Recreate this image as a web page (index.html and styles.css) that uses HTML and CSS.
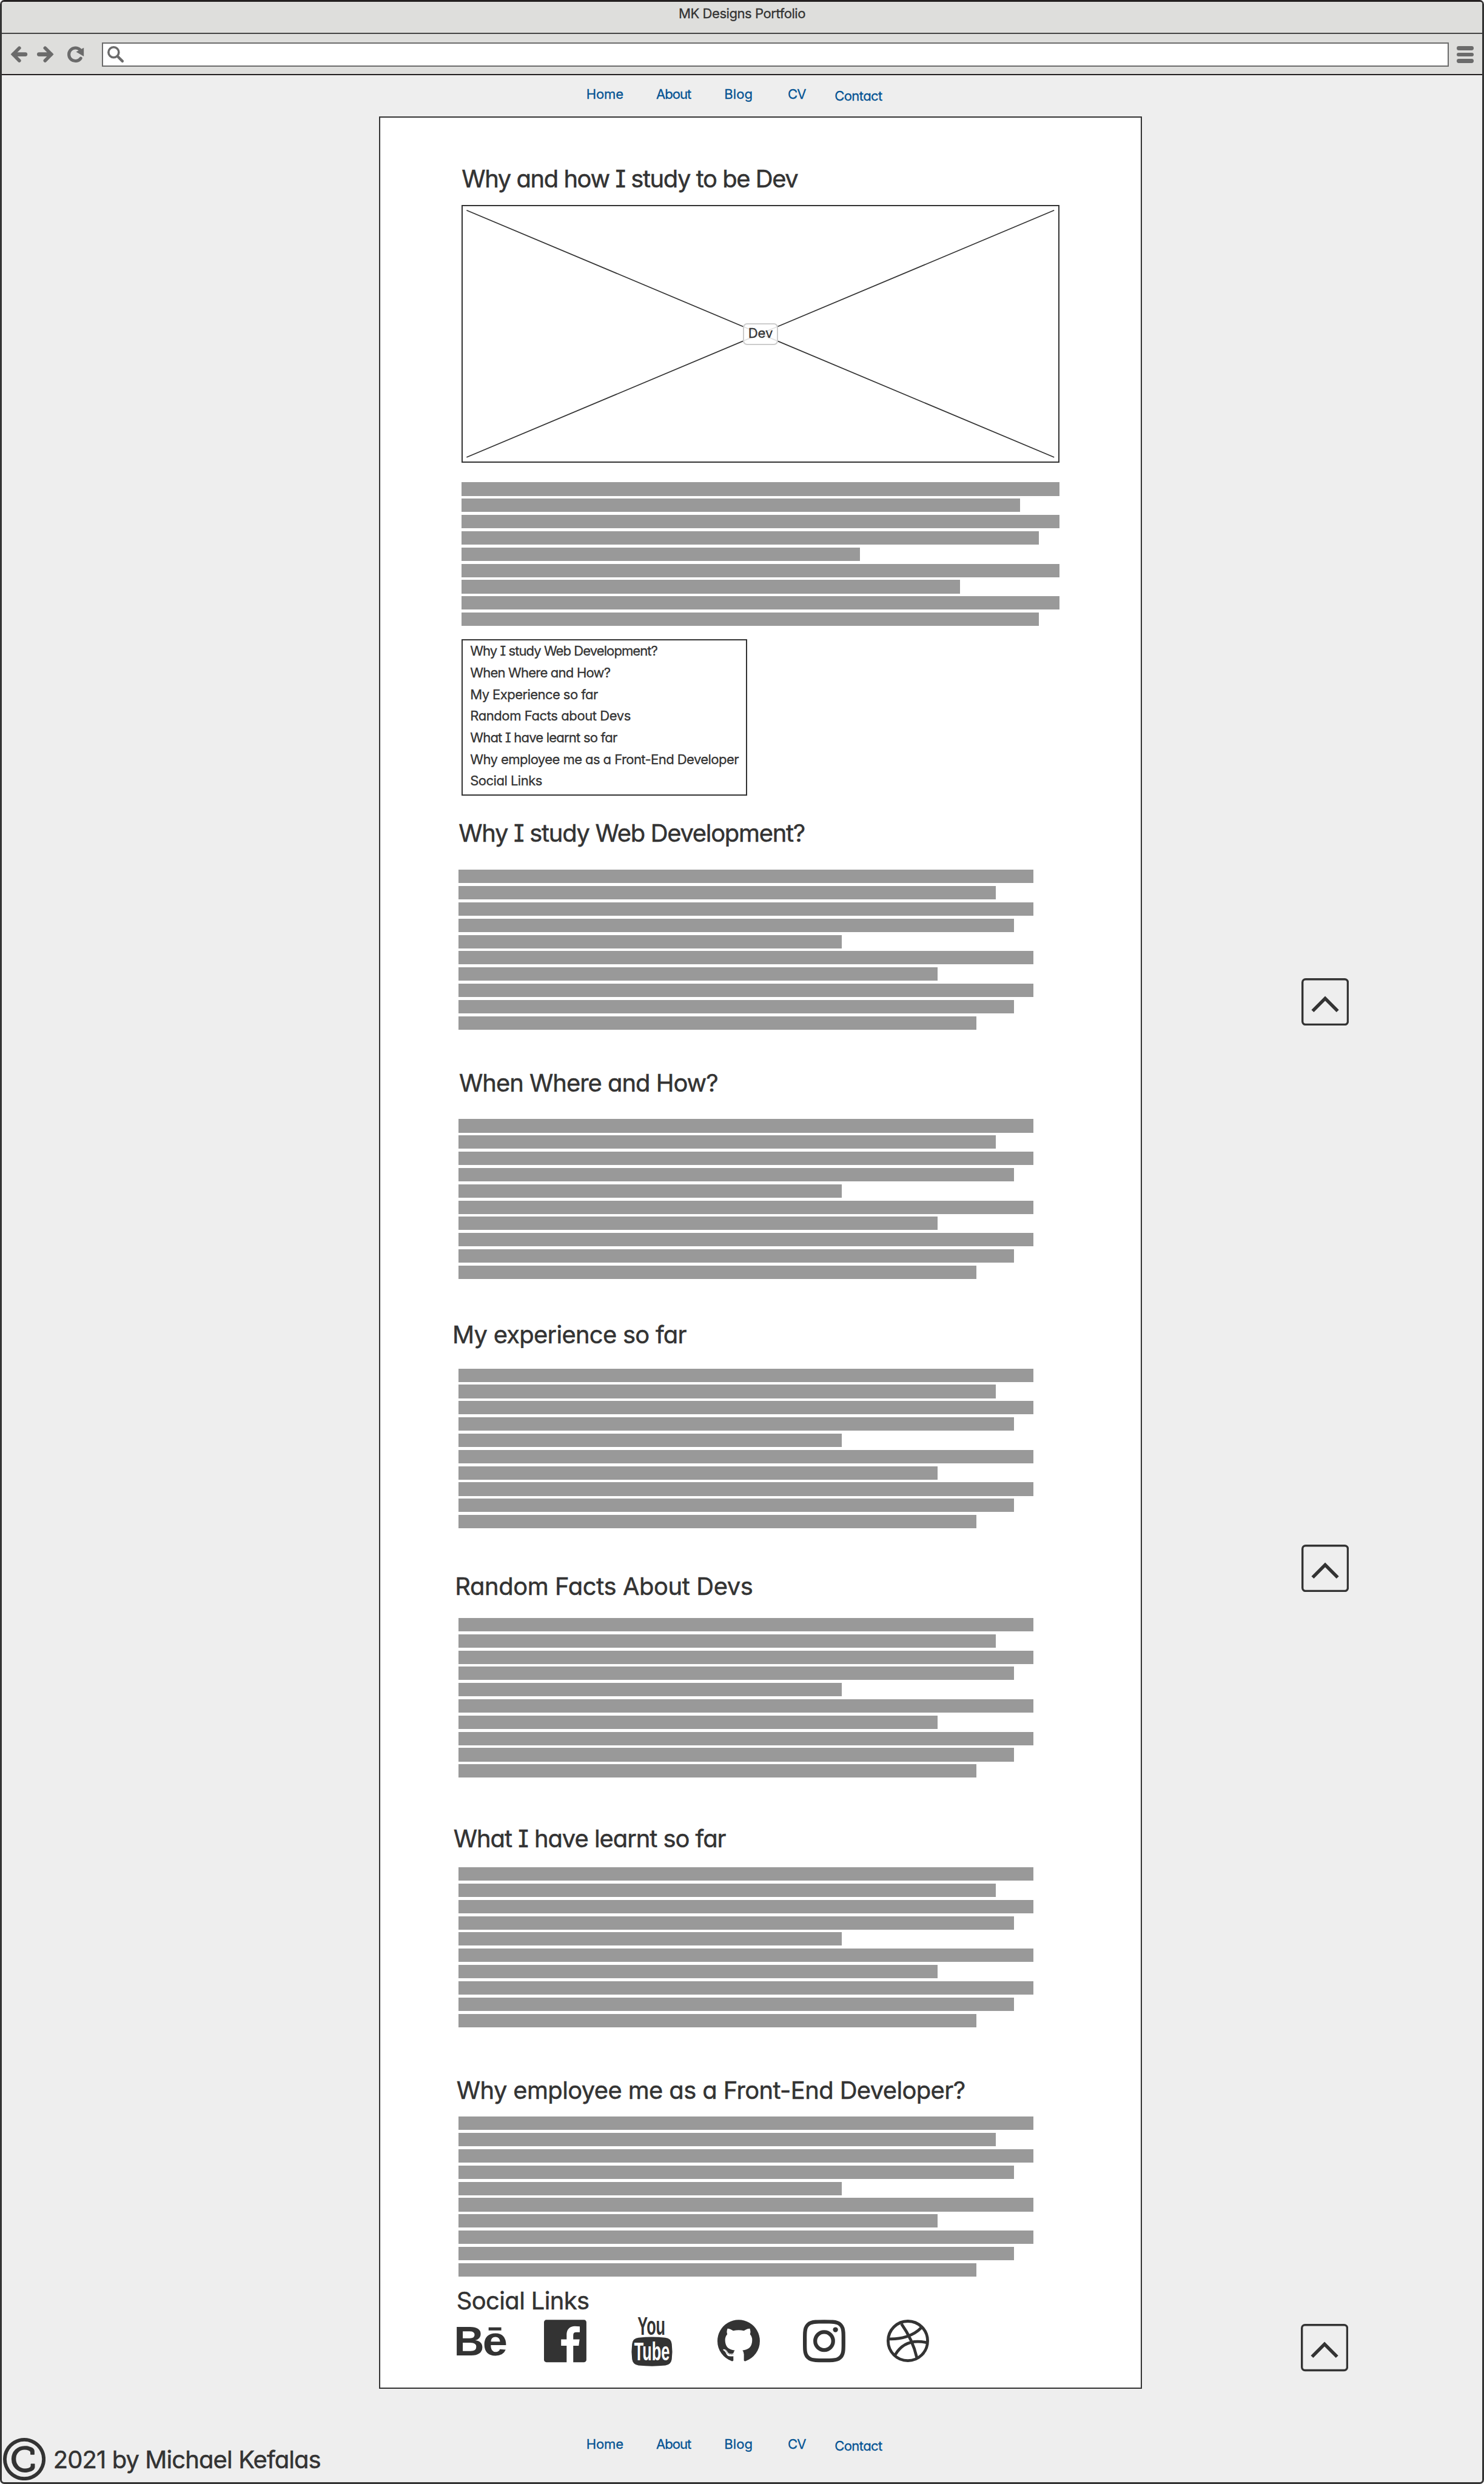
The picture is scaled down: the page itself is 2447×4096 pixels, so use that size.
FILE: index.html
```html
<!DOCTYPE html>
<html lang="en">
<head>
<meta charset="utf-8">
<title>MK Designs Portfolio</title>
<link rel="stylesheet" href="styles.css">
</head>
<body>
<div class="window">
  <header class="titlebar"><span class="t-title">MK Designs Portfolio</span></header>
  <div class="toolbar">
    <svg class="tool back" viewBox="0 0 32 32"><path d="M16.3 3.7 4.2 16l12.1 12.3" stroke-width="6.6"/><path d="M5.5 16H28" stroke-width="8"/></svg>
    <svg class="tool forward" viewBox="0 0 32 32"><path d="M15.7 3.7 27.8 16 15.7 28.3" stroke-width="6.6"/><path d="M26.5 16H4" stroke-width="8"/></svg>
    <svg class="tool reload" viewBox="0 0 32 32"><path d="M24.5 7A12.7 12.7 0 1 0 26 23.7" stroke-width="6"/><path class="solid" d="M32 3.3V20L17 11.3Z"/></svg>
    <div class="address"><svg class="tool search" viewBox="0 0 32 32"><circle cx="12.2" cy="12" r="10" stroke-width="4.2"/><path d="M20 20l9.3 9.3" stroke-width="5.2"/></svg></div>
    <div class="menu"><i></i><i></i><i></i></div>
  </div>
  <nav class="nav">
    <a class="t-home">Home</a><a class="t-about">About</a><a class="t-blog">Blog</a><a class="t-cv">CV</a><a class="t-contact">Contact</a>
  </nav>
  <div class="canvas">
    <main class="page">
      <h1 class="heading t-main">Why and how I study to be Dev</h1>
      <div class="picture">
        <svg viewBox="0 0 1156 496" preserveAspectRatio="none"><path d="M7.500 8 1148.500 488M7.500 488 1148.500 8"/></svg>
        <span class="picture-label">Dev</span>
      </div>
      <div class="lines intro"><i></i><i></i><i></i><i></i><i></i><i></i><i></i><i></i><i></i></div>
      <ul class="contents">
        <li class="c1">Why I study Web Development?</li>
        <li class="c2">When Where and How?</li>
        <li class="c3">My Experience so far</li>
        <li class="c4">Random Facts about Devs</li>
        <li class="c5">What I have learnt so far</li>
        <li class="c6">Why employee me as a Front-End Developer</li>
        <li class="c7">Social Links</li>
      </ul>
      <section class="section s1">
        <h2 class="heading">Why I study Web Development?</h2>
        <div class="lines"><i></i><i></i><i></i><i></i><i></i><i></i><i></i><i></i><i></i><i></i></div>
      </section>
      <section class="section s2">
        <h2 class="heading">When Where and How?</h2>
        <div class="lines"><i></i><i></i><i></i><i></i><i></i><i></i><i></i><i></i><i></i><i></i></div>
      </section>
      <section class="section s3">
        <h2 class="heading">My experience so far</h2>
        <div class="lines"><i></i><i></i><i></i><i></i><i></i><i></i><i></i><i></i><i></i><i></i></div>
      </section>
      <section class="section s4">
        <h2 class="heading">Random Facts About Devs</h2>
        <div class="lines"><i></i><i></i><i></i><i></i><i></i><i></i><i></i><i></i><i></i><i></i></div>
      </section>
      <section class="section s5">
        <h2 class="heading">What I have learnt so far</h2>
        <div class="lines"><i></i><i></i><i></i><i></i><i></i><i></i><i></i><i></i><i></i><i></i></div>
      </section>
      <section class="section s6">
        <h2 class="heading">Why employee me as a Front-End Developer?</h2>
        <div class="lines"><i></i><i></i><i></i><i></i><i></i><i></i><i></i><i></i><i></i><i></i></div>
      </section>
      <section class="social">
        <h2 class="heading">Social Links</h2>
        <div class="icons">
          <svg class="behance" viewBox="0 0 96 98"><text x="-5.4" y="77" font-size="81.5">B</text><text x="50.4" y="77" font-size="81.5" textLength="48.5" lengthAdjust="spacingAndGlyphs">e</text><rect x="62" y="22" width="24.6" height="6"/></svg>
          <svg class="facebook" viewBox="0 -10 1536 1829"><path d="M1451 128q35 0 60 25t25 60v1366q0 35-25 60t-60 25h-391v-595h199l30-232h-229v-148q0-56 23.500-84t91.500-28l122-1v-207q-63-9-178-9-136 0-217.500 80t-81.500 226v171h-200v232h200v595h-735q-35 0-60-25t-25-60v-1366q0-35 25-60t60-25h1366z"/></svg>
          <svg class="youtube" viewBox="0 0 80 98"><text x="12" y="36.5" font-size="50" textLength="54" lengthAdjust="spacingAndGlyphs">You</text><path d="M14 42Q40 39.500 66 42 77 43 78.500 54 80.500 69 78.500 84 77 95 66 96 40 98.500 14 96 3 95 1.500 84-.5 69 1.500 54 3 43 14 42Z"/><text class="inverse" x="5.5" y="86" font-size="49" textLength="69" lengthAdjust="spacingAndGlyphs">Tube</text></svg>
          <svg class="github" viewBox="0 -10 1536 1829"><path d="M768 128q209 0 385.500 103t279.500 279.500 103 385.500q0 251-146.500 451.500t-378.500 277.500q-27 5-40-7t-13-30q0-3 .5-76.500t.5-134.500q0-97-52-142 57-6 102.500-18t94-39 81-66.500 53-105 20.500-150.500q0-119-79-206 37-91-8-204-28-9-81 11t-92 44l-38 24q-93-26-192-26t-192 26q-16-11-42.500-27t-83.500-38.500-85-13.500q-45 113-8 204-79 87-79 206 0 85 20.500 150t52.500 105 80.500 67 94 39 102.500 18q-39 36-49 103-21 10-45 15t-57 5-65.500-21.500-55.500-62.500q-19-32-48.500-52t-49.500-24l-20-3q-21 0-29 4.500t-5 11.500 9 14 13 12l7 5q22 10 43.500 38t31.500 51l10 23q13 38 44 61.500t67 30 69.500 7 55.500-3.500l23-4q0 38 .5 88.500t.5 54.500q0 18-13 30t-40 7q-232-77-378.500-277.500t-146.500-451.500q0-209 103-385.500t279.500-279.500 385.500-103zm-477 1103q3-7-7-12-10-3-13 2-3 7 7 12 9 6 13-2zm31 34q7-5-2-16-10-9-16-3-7 5 2 16 10 10 16 3zm30 45q9-7 0-19-8-13-17-6-9 5 0 18t17 7zm42 42q8-8-4-19-12-12-20-3-9 8 4 19 12 12 20 3zm57 25q3-11-13-16-15-4-19 7t13 15q15 6 19-6zm63 5q0-13-17-11-16 0-16 11 0 13 17 11 16 0 16-11zm58-10q-2-11-18-9-16 3-14 15t18 8 14-14z"/></svg>
          <svg class="instagram" viewBox="0 -10 1536 1829"><path d="M1024 896q0-106-75-181t-181-75-181 75-75 181 75 181 181 75 181-75 75-181zm138 0q0 164-115 279t-279 115-279-115-115-279 115-279 279-115 279 115 115 279zm108-410q0 38-27 65t-65 27-65-27-27-65 27-65 65-27 65 27 27 65zm-502-220q-7 0-76.500-.5t-105.500 0-96.500 3-103 10-71.500 18.500q-50 20-88 58t-58 88q-11 29-18.500 71.500t-10 103-3 96.500 0 105.500.5 76.500-.5 76.500 0 105.500 3 96.500 10 103 18.500 71.500q20 50 58 88t88 58q29 11 71.500 18.500t103 10 96.500 3 105.500 0 76.500-.5 76.500.5 105.500 0 96.500-3 103-10 71.500-18.500q50-20 88-58t58-88q11-29 18.500-71.500t10-103 3-96.500 0-105.500-.5-76.500.5-76.500 0-105.500-3-96.500-10-103-18.500-71.500q-20-50-58-88t-88-58q-29-11-71.500-18.500t-103-10-96.500-3-105.500 0-76.500.5zm768 630q0 229-5 317-10 208-124 322t-322 124q-88 5-317 5t-317-5q-208-10-322-124t-124-322q-5-88-5-317t5-317q10-208 124-322t322-124q88-5 317-5t317 5q208 10 322 124t124 322q5 88 5 317z"/></svg>
          <svg class="dribbble" viewBox="0 -21.5 247 294"><g><circle cx="123.5" cy="123.5" r="115"/><path d="M86 24C130 86 160 151 176 221M15 112C80 114 155 96 202 46M50 204C90 136 155 116 232 133"/></g></svg>
        </div>
      </section>
    </main>
    <aside class="jumps">
      <svg class="jump j1" viewBox="0 0 92 92"><rect x="2" y="2" width="88" height="88" rx="6"/><path d="M21.700 63.700 46 39.300 70.300 63.700"/></svg>
      <svg class="jump j2" viewBox="0 0 92 92"><rect x="2" y="2" width="88" height="88" rx="6"/><path d="M21.700 63.700 46 39.300 70.300 63.700"/></svg>
      <svg class="jump j3" viewBox="0 0 92 92"><rect x="2" y="2" width="88" height="88" rx="6"/><path d="M21.700 63.700 46 39.300 70.300 63.700"/></svg>
    </aside>
  </div>
  <footer class="footer">
    <div class="copyright">
      <svg viewBox="0 128 1536 1536"><path d="M1150 1074v109q0 50-36.500 89t-94 60.500-118 32.500-117.500 11q-205 0-342.500-139t-137.500-346q0-203 136-339t339-136q34 0 75.500 4.500t93 18 92.500 34 69 56.500 28 81v109q0 16-16 16h-118q-16 0-16-16v-70q0-43-65.500-67.500t-137.500-24.500q-140 0-228.500 91.500t-88.500 237.500q0 151 91.500 249.500t233.500 98.500q68 0 138-24t70-66v-70q0-7 4.500-11.500t10.500-4.500h119q6 0 11 4.500t5 11.500zm-382-818q-130 0-248.500 51t-204 136.500-136.500 204-51 248.500 51 248.500 136.500 204 204 136.500 248.500 51 248.500-51 204-136.500 136.500-204 51-248.500-51-248.500-136.500-204-204-136.500-248.500-51zm768 640q0 209-103 385.500t-279.500 279.500-385.500 103-385.500-103-279.500-279.500-103-385.500 103-385.500 279.500-279.500 385.500-103 385.500 103 279.500 279.500 103 385.500z"/></svg>
      <span class="heading">2021 by Michael Kefalas</span>
    </div>
    <nav class="nav">
      <a class="t-home">Home</a><a class="t-about">About</a><a class="t-blog">Blog</a><a class="t-cv">CV</a><a class="t-contact">Contact</a>
    </nav>
  </footer>
</div>
</body>
</html>
```
FILE: styles.css
```css
/* 1rem = 100 design pixels on a 2880px wide canvas */
html { font-size: 84.965px; }
* { box-sizing: border-box; }
body { margin: 0; background: #fff; color: #333; font-family: Inter, "Open Sans", sans-serif; font-size: .26rem; font-weight: 400; line-height: .42rem; font-feature-settings: "cv11", "cv08"; -webkit-text-stroke: .3px; }
h1, h2, ul { margin: 0; padding: 0; list-style: none; }
svg { display: block; fill: #333; -webkit-text-stroke: 0; }

/* browser chrome */
.window { display: flex; flex-direction: column; height: 4096px; border: 3px solid #333; border-top-color: #231f20; border-radius: 7px; background: #eee; overflow: hidden; }
.titlebar { height: .62rem; padding-top: .027rem; border-bottom: 2px solid #444; background: #dededc; text-align: center; }
.t-title { letter-spacing: -.0217em; }
.toolbar { display: flex; align-items: center; height: .8rem; padding: .03rem 0 0 .18rem; border-bottom: 2px solid #231f20; background: #dededc; }
.tool { width: .32rem; height: .32rem; fill: none; stroke: #6b6b6b; stroke-linecap: round; overflow: visible; }
.tool .solid { fill: #6b6b6b; stroke: none; }
.forward { margin-left: .18rem; }
.reload { margin-left: .27rem; }
.address { display: flex; align-items: center; width: 26.14rem; height: .48rem; margin-left: .35rem; padding-left: .09rem; border: 2px solid #6b6b6b; background: #fff; }
.menu { display: flex; flex-direction: column; gap: .04rem; width: .32rem; margin-left: .16rem; }
.menu i { height: .08rem; border-radius: .04rem; background: #6b6b6b; }

.nav { display: grid; grid-template-columns: 1.356rem 1.321rem 1.235rem .908rem 1.2rem; height: .8rem; padding: .17rem 0 0 11.343rem; color: #045393; }
.t-home { letter-spacing: -.0064em; }
.t-about { letter-spacing: -.0453em; }
.t-blog { letter-spacing: .0033em; }
.t-cv { letter-spacing: -.0447em; }
.t-contact { padding-top: .04rem; letter-spacing: -.0282em; }

/* article */
.canvas { display: flex; height: 44.1rem; }
.page { width: 14.8rem; margin-left: 7.325rem; border: 2px solid #333; background: #fff; padding: .901rem 1.576rem 0; }
.heading { display: block; font-size: .47rem; font-weight: 400; line-height: .6rem; white-space: nowrap; -webkit-text-stroke: .5px; }
.t-main { letter-spacing: -.0361em; }
.picture { display: grid; width: 11.6rem; height: 5rem; margin-top: .203rem; border: 2px solid #333; }
.picture > * { grid-area: 1 / 1; }
.picture svg { width: 100%; height: 100%; fill: none; stroke: #333; stroke-width: 2; }
.picture-label { place-self: center; width: .68rem; height: .42rem; border: 2px solid #ccc; border-radius: .08rem; background: rgba(255, 255, 255, .85); text-align: center; line-height: .335rem; }
.lines { display: grid; grid-auto-rows: .26rem; gap: .056rem; width: 11.16rem; }
.lines i { background: #999; }
.lines i:nth-child(2) { width: 93.4%; }
.lines i:nth-child(4), .lines i:nth-child(9) { width: 96.6%; }
.lines i:nth-child(5) { width: 66.67%; }
.lines i:nth-child(7) { width: 83.33%; }
.lines i:nth-child(10) { width: 90%; }
.intro { width: 11.6rem; margin-top: .38rem; }
.contents { width: 5.54rem; height: 3.04rem; margin-top: .252rem; padding: .009rem 0 0 .141rem; border: 2px solid #333; white-space: nowrap; }
.c1 { letter-spacing: -.0434em; }
.c2 { letter-spacing: -.037em; }
.c3 { letter-spacing: -.0271em; }
.c4 { letter-spacing: -.0205em; }
.c5 { letter-spacing: -.037em; }
.c6 { letter-spacing: -.027em; }
.c7 { letter-spacing: -.0244em; }

.section { margin: 0 0 .2984rem -.06rem; }
.section .heading { height: 1.44rem; }
.s1 .heading { padding-top: .439rem; letter-spacing: -.0322em; }
.s2 .heading { padding-top: .443rem; margin-left: .01rem; letter-spacing: -.0252em; }
.s3 .heading { padding-top: .492rem; margin-left: -.12rem; letter-spacing: -.0185em; }
.s4 .heading { padding-top: .534rem; margin-left: -.07rem; letter-spacing: -.0101em; }
.s5 .heading { padding-top: .59rem; margin-left: -.1rem; letter-spacing: -.0261em; }
.s6 .heading { padding-top: .634rem; margin-left: -.04rem; letter-spacing: -.0155em; }
.s6 { margin-bottom: .181rem; }

.social { margin-left: -.1rem; }
.social .heading { letter-spacing: -.0154em; }
.icons { display: flex; height: .98rem; margin-top: -.018rem; }
.icons svg { height: .98rem; flex: none; overflow: visible; }
.icons text { font-family: "Liberation Sans", sans-serif; font-weight: 700; }
.youtube text { font-family: "Liberation Sans Narrow", "Liberation Sans", sans-serif; }
.icons .inverse { fill: #fff; }
.behance { width: .96rem; }
.facebook { width: .823rem; margin-left: .74rem; }
.youtube { width: .8rem; margin-left: .87rem; }
.github { width: .823rem; margin-left: .87rem; }
.instagram { width: .823rem; margin-left: .837rem; }
.dribbble { width: .823rem; margin-left: .797rem; }
.dribbble g { fill: none; stroke: #333; stroke-width: 17; }

/* back-to-top buttons */
.jumps { width: 1rem; margin-left: 3.1rem; }
.jump { width: .92rem; height: .92rem; fill: none; stroke: #333; stroke-width: 4; }
.jump path { stroke-width: 6.6; }
.j1 { margin-top: 16.728rem; }
.j2 { margin-top: 10.07rem; }
.j3 { margin: 14.213rem 0 0 -.017rem; }

.footer { display: grid; grid-template-columns: 11.343rem auto; height: 1.8rem; }
.copyright { display: flex; align-items: flex-start; padding: .955rem 0 0 .018rem; }
.copyright svg { width: .825rem; height: .825rem; }
.copyright .heading { margin: .131rem 0 0 .154rem; letter-spacing: -.0219em; }
.footer .nav { padding: .872rem 0 0; height: auto; }
```
